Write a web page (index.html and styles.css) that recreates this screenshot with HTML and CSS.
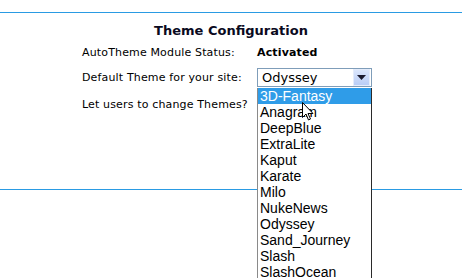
FILE: index.html
```html
<!DOCTYPE html>
<html lang="en">
<head>
    <meta charset="UTF-8">
    <title>Theme Configuration</title>
    <link rel="stylesheet" href="styles.css">
</head>
<body>
    <div class="frame">
        <h2 class="title">Theme Configuration</h2>

        <div class="form">
            <!-- Status -->
            <div class="row">
                <div class="label">AutoTheme Module Status:</div>
                <div class="value strong">Activated</div>
            </div>

            <!-- Default theme -->
            <div class="row row-select">
                <div class="label">Default Theme for your site:</div>
                <div class="value">
                    <div class="select">
                        <span class="select-text">Odyssey</span>
                        <span class="select-btn">
                            <svg width="9" height="5" viewBox="0 0 9 5"><path d="M0 0h9L4.5 5z" fill="#1a1a2e"/></svg>
                        </span>

                        <ul class="dropdown">
                            <li class="selected">3D-Fantasy</li>
                            <li>Anagram</li>
                            <li>DeepBlue</li>
                            <li>ExtraLite</li>
                            <li>Kaput</li>
                            <li>Karate</li>
                            <li>Milo</li>
                            <li>NukeNews</li>
                            <li>Odyssey</li>
                            <li>Sand_Journey</li>
                            <li>Slash</li>
                            <li>SlashOcean</li>
                        </ul>

                        <!-- mouse pointer -->
                        <svg class="cursor" width="12" height="19" viewBox="0 0 12 19">
                            <path d="M0.5 0.5v15l3.5-3.5 2.5 6 2-1-2.5-5.5h5z" fill="#fff" stroke="#000" stroke-width="1"/>
                        </svg>
                    </div>
                </div>
            </div>

            <!-- Users may change -->
            <div class="row row-last">
                <div class="label">Let users to change Themes?</div>
                <div class="value"></div>
            </div>
        </div>
    </div>
</body>
</html>
```

FILE: styles.css
```css
html, body {
    height: 278px;
    overflow: hidden;
}
body {
    margin: 0;
    font-family: 'DejaVu Sans', Verdana, sans-serif;
    font-size: 11px;
    letter-spacing: 0.15px;
    color: #000;
    background-color: #fff;
}
.frame {
    margin-top: 12px;
    height: 176px;
    border-top: 1px solid #2a9be3;
    border-bottom: 1px solid #2a9be3;
}
.title {
    margin: 0;
    padding-top: 10px;
    font-size: 13px;
    line-height: 16px;
    letter-spacing: 0;
    text-align: center;
    color: #0a0a1e;
}
.form {
    margin: 3px 0 0 82px;
}
.row {
    display: flex;
    align-items: center;
    height: 20px;
}
.row-select {
    margin-top: 5px;
}
.row-last {
    margin-top: 7px;
}
.label {
    width: 175px;
}
.strong {
    font-weight: bold;
}
.select {
    position: relative;
    display: flex;
    align-items: center;
    width: 113px;
    height: 17px;
    border: 1px solid #7f9db9;
    background-color: #fff;
    letter-spacing: 0;
}
.select-text {
    flex: 1;
    padding-left: 4px;
    font-size: 13px;
}
.select-btn {
    display: flex;
    align-items: center;
    justify-content: center;
    width: 15px;
    height: 15px;
    margin-right: 1px;
    border: 1px solid #e4ecfb;
    background: linear-gradient(#dbe6fc, #b9cdf6);
}
.dropdown {
    position: absolute;
    top: 19px;
    left: -1px;
    width: 113px;
    margin: 0;
    padding: 0;
    list-style: none;
    border-left: 1px solid #8a8a8a;
    border-right: 1px solid #2a2a2a;
    background-color: #fff;
    font-family: 'Liberation Sans', Arial, sans-serif;
    font-size: 14px;
    z-index: 2;
}
.dropdown li {
    height: 16px;
    line-height: 16px;
    padding-left: 2px;
}
.dropdown li.selected {
    background-color: #2f9ce8;
    color: #fff;
}
.cursor {
    position: absolute;
    left: 44px;
    top: 33px;
    z-index: 3;
}
```
